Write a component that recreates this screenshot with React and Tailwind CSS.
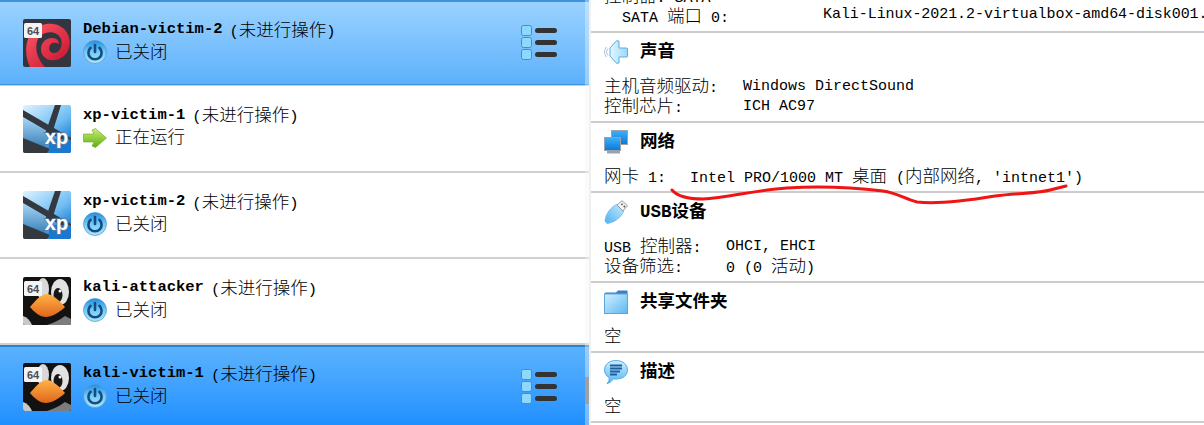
import React from 'react'

const CJK = /([\u3000-\u9fff\uff00-\uffef]+)/

// Latin runs sit in the mono face, CJK runs get a larger size like the original
function T({ children }) {
  return (
    <span>
      {String(children).split(CJK).map((part, i) =>
        CJK.test(part)
          ? <span key={i} className="text-[17.5px] font-['Noto_Sans_CJK_SC'] font-light">{part}</span>
          : <span key={i}>{part}</span>
      )}
    </span>
  )
}

function Badge64() {
  return (
    <>
      <rect x="1" y="4" width="18" height="15" rx="1.5" fill="#f4f4f4" />
      <text x="10" y="15.5" textAnchor="middle" fontSize="11" fontWeight="700" fontFamily="'Liberation Sans', sans-serif" fill="#4a4d55">64</text>
    </>
  )
}

function DebianIcon() {
  return (
    <svg width="48" height="48" viewBox="0 0 48 48" className="shrink-0">
      <defs>
        <linearGradient id="deb" x1="0" y1="0" x2="1" y2="1">
          <stop offset="0" stopColor="#ff5a68" />
          <stop offset="1" stopColor="#c4102c" />
        </linearGradient>
      </defs>
      <rect width="48" height="48" rx="2" fill="#33363f" />
      <path d="M7 48 C1 36 2 20 10 12 C18 3 34 2 42 11 C49 19 48 31 41 37 C34 43 23 43 19 35 C16 28 20 19 29 19 C33 19 36 21 36 25 C34 24 30 23 28 25 C24 29 27 35 32 34 C37 33 40 27 38 20 C35 12 24 11 17 17 C11 24 12 38 22 48 Z" fill="url(#deb)" />
      <Badge64 />
    </svg>
  )
}

function XpIcon() {
  return (
    <svg width="48" height="48" viewBox="0 0 48 48" className="shrink-0">
      <defs>
        <linearGradient id="xpg" x1="0" y1="0" x2="0.7" y2="1">
          <stop offset="0" stopColor="#e0f3ff" />
          <stop offset="0.6" stopColor="#6dbcf2" />
          <stop offset="1" stopColor="#1270c8" />
        </linearGradient>
        <linearGradient id="xpl" x1="0" y1="0" x2="0" y2="1">
          <stop offset="0" stopColor="#a8d8f8" />
          <stop offset="1" stopColor="#3c80b8" />
        </linearGradient>
      </defs>
      <rect width="48" height="48" rx="2" fill="url(#xpg)" />
      <path d="M0 12 L24 27 L22 42 L0 34 Z" fill="url(#xpl)" />
      <path d="M0 33 L27 44 L24 48 L2 48 Q0 48 0 46 Z" fill="#33393f" />
      <path d="M0 5 L48 33 L48 40 L0 12 Z" fill="#33393f" />
      <path d="M32 0 L38 0 L28 32 L22 29 Z" fill="#33393f" />
      <rect x="26" y="34" width="22" height="14" rx="2" fill="#1a78d0" />
      <text x="33.5" y="39" textAnchor="middle" fontSize="20" fontWeight="700" fontFamily="'Liberation Sans', sans-serif" fill="#fff" stroke="#5a7fa8" strokeWidth="1.6" paintOrder="stroke">xp</text>
    </svg>
  )
}

function KaliIcon() {
  return (
    <svg width="48" height="48" viewBox="0 0 48 48" className="shrink-0">
      <defs>
        <linearGradient id="beak" x1="0" y1="0" x2="0" y2="1">
          <stop offset="0" stopColor="#ffb347" />
          <stop offset="1" stopColor="#e0651a" />
        </linearGradient>
      </defs>
      <rect width="48" height="48" rx="2" fill="#121212" />
      <path d="M0 39 Q6 41 9 48 L2 48 Q0 48 0 46 Z" fill="#c8c8c8" />
      <path d="M24 48 Q34 45 42 39 L48 42 L48 46 Q48 48 46 48 Z" fill="#7c7c7c" />
      <ellipse cx="37" cy="15" rx="9" ry="13" fill="#e2e2e2" />
      <ellipse cx="20" cy="12" rx="6" ry="11" fill="#d8d8d8" />
      <ellipse cx="35" cy="18" rx="4.5" ry="7" fill="#161616" />
      <circle cx="37" cy="14" r="1.5" fill="#fff" />
      <path d="M7 30 C12 24 18 17 24 17 C29 17 37 24 42 30 C36 36 28 40 23 40 C17 40 11 35 7 30 Z" fill="url(#beak)" />
      <Badge64 />
    </svg>
  )
}

function PowerIcon() {
  return (
    <svg width="24" height="24" viewBox="0 0 24 24" className="shrink-0">
      <defs>
        <linearGradient id="pw" x1="0" y1="0" x2="0" y2="1">
          <stop offset="0" stopColor="#1f8fe2" />
          <stop offset="0.5" stopColor="#6ecdf8" />
          <stop offset="1" stopColor="#a8e8fd" />
        </linearGradient>
      </defs>
      <circle cx="12" cy="12" r="11.5" fill="url(#pw)" stroke="#5b93c4" strokeWidth="0.7" />
      <path d="M7.6 7.8 A6.6 6.6 0 1 0 16.4 7.8" fill="none" stroke="#1b4a80" strokeWidth="2.6" strokeLinecap="round" />
      <path d="M12 5 V12" stroke="#1b4a80" strokeWidth="2.6" strokeLinecap="round" />
    </svg>
  )
}

function ArrowIcon() {
  return (
    <svg width="24" height="24" viewBox="0 0 24 24" className="shrink-0">
      <defs>
        <linearGradient id="arr" x1="0" y1="0" x2="0" y2="1">
          <stop offset="0" stopColor="#c8ee70" />
          <stop offset="1" stopColor="#5cb012" />
        </linearGradient>
      </defs>
      <path d="M0.5 8 H11 L9 4 L12.5 2.5 L23.5 12 L12.5 21.5 L9 20 L11 16 H0.5 Z" fill="url(#arr)" stroke="#6fa12c" strokeWidth="0.6" strokeLinejoin="round" />
    </svg>
  )
}

function MenuIcon() {
  return (
    <svg width="36" height="36" viewBox="0 0 36 36" className="shrink-0">
      {[0, 12, 24].map(y => (
        <g key={y}>
          <rect x="0.5" y={y + 0.5} width="10" height="10" rx="2" fill="#8fd8fd" stroke="#3a8fd8" />
          <rect x="14" y={y + 3} width="22" height="5" rx="2.5" fill="#333" />
        </g>
      ))}
    </svg>
  )
}

function SoundIcon() {
  return (
    <svg width="24" height="24" viewBox="0 0 24 24">
      <defs>
        <linearGradient id="snd" x1="0" y1="0" x2="1" y2="0">
          <stop offset="0" stopColor="#e4f6ff" />
          <stop offset="1" stopColor="#9adaf9" />
        </linearGradient>
      </defs>
      <path d="M0.5 12 A9 9 0 0 1 2.5 7 M2.5 12 A7 7 0 0 1 4 8.5 M0.5 12 A9 9 0 0 0 2.5 17 M2.5 12 A7 7 0 0 0 4 15.5" fill="none" stroke="#9bb4c8" strokeWidth="0.8" />
      <path d="M6 8 L12.5 0.7 L15 1 V8 H22.5 Q23.5 8 23.5 9 V16 Q23.5 17 22.5 17 H15 V23 L12.5 23.3 L6 16 Z" fill="url(#snd)" stroke="#4aa3e4" strokeWidth="0.9" strokeLinejoin="round" />
    </svg>
  )
}

function NetworkIcon() {
  return (
    <svg width="24" height="24" viewBox="0 0 24 24">
      <defs>
        <linearGradient id="net" x1="0" y1="0" x2="0" y2="1">
          <stop offset="0" stopColor="#3fb0f8" />
          <stop offset="1" stopColor="#0878dc" />
        </linearGradient>
      </defs>
      <rect x="7.5" y="0.5" width="16" height="14" fill="url(#net)" stroke="#9aa3ab" />
      <rect x="0.5" y="7.5" width="16" height="13" fill="url(#net)" stroke="#9aa3ab" />
      <rect x="3" y="21" width="13" height="2.5" fill="#9aa3ab" />
    </svg>
  )
}

function UsbIcon() {
  return (
    <svg width="24" height="24" viewBox="0 0 24 24">
      <defs>
        <linearGradient id="usb" x1="0" y1="1" x2="1" y2="0">
          <stop offset="0" stopColor="#4fb2f2" />
          <stop offset="1" stopColor="#c4eafe" />
        </linearGradient>
      </defs>
      <path d="M1 21 C1.5 14 7 7 12.5 4.5 L19.5 11.5 C17 18 9 23 3 23.5 Z" fill="url(#usb)" stroke="#58aee8" strokeWidth="0.7" />
      <path d="M13 5 L18 0.7 L23.5 5.7 L19 11 Z" fill="#f2f4f6" stroke="#7b8791" strokeWidth="0.8" />
      <rect x="17.2" y="3.5" width="1.6" height="1.6" fill="#555" transform="rotate(45 18 4.3)" />
      <rect x="19.6" y="5.7" width="1.6" height="1.6" fill="#555" transform="rotate(45 20.4 6.5)" />
    </svg>
  )
}

function FolderIcon() {
  return (
    <svg width="24" height="24" viewBox="0 0 24 24">
      <defs>
        <linearGradient id="fol" x1="0" y1="0" x2="1" y2="1">
          <stop offset="0" stopColor="#d2f0ff" />
          <stop offset="1" stopColor="#5cb8f3" />
        </linearGradient>
      </defs>
      <path d="M0.5 4 Q0.5 2.5 2 2.5 H12 L14 0.5 H23.5 V5 H0.5 Z" fill="#3c7fc4" />
      <rect x="0.5" y="4" width="23" height="19.5" fill="url(#fol)" stroke="#5aa7e0" />
    </svg>
  )
}

function DescIcon() {
  return (
    <svg width="24" height="24" viewBox="0 0 24 24">
      <defs>
        <linearGradient id="dsc" x1="0" y1="0" x2="0" y2="1">
          <stop offset="0" stopColor="#c8edff" />
          <stop offset="1" stopColor="#58b8f4" />
        </linearGradient>
      </defs>
      <path d="M12 0.5 C19 0.5 23.5 4.5 23.5 10 C23.5 15.5 19 19 12 19 C11 19 10 19 9 18.8 C8 21 6 23 3 23.5 C5 21.5 5.5 19.5 5 17.5 C2 16 0.5 13 0.5 10 C0.5 4.5 5 0.5 12 0.5 Z" fill="url(#dsc)" stroke="#3f9be0" strokeWidth="0.8" />
      <path d="M6 5.5 H18 M6 8.5 H18 M6 11.5 H16 M6 14.5 H13" stroke="#1f5f9e" strokeWidth="1.8" />
    </svg>
  )
}

const VMS = [
  { name: 'Debian-victim-2', icon: DebianIcon, status: '已关闭', tone: 'top', h: 'h-[86px]' },
  { name: 'xp-victim-1', icon: XpIcon, status: '正在运行', h: 'h-[87px]' },
  { name: 'xp-victim-2', icon: XpIcon, status: '已关闭', h: 'h-[86px]' },
  { name: 'kali-attacker', icon: KaliIcon, status: '已关闭', h: 'h-[86px]' },
  { name: 'kali-victim-1', icon: KaliIcon, status: '已关闭', tone: 'bottom', h: 'h-[82px]' },
]

function VmRow({ vm }) {
  const Icon = vm.icon
  const bg = vm.tone === 'top'
    ? 'bg-gradient-to-b from-[#9ad2ff] to-[#5cb1fb] border-t-2 border-t-[#3d93dc]'
    : vm.tone === 'bottom'
      ? 'bg-gradient-to-b from-[#5ab2fd] to-[#1c8fff] border-t-2 border-t-[#2b80cf]'
      : ''
  return (
    <div className={`${vm.h} shrink-0 flex flex-col`}>
      <div className={`flex-1 flex items-center pl-[23px] pr-[32px] ${bg}`}>
        <Icon />
        <div className="ml-3 mb-[4px] flex-1 flex flex-col font-['Liberation_Mono'] text-[15.5px] text-black">
          <div className="h-[22px] flex items-center">
            <span className="font-bold">{vm.name}</span>
            <span className="ml-[7px]"><T>{'(未进行操作)'}</T></span>
          </div>
          <div className="h-[22px] flex items-center gap-2">
            {vm.status === '正在运行' ? <ArrowIcon /> : <PowerIcon />}
            <T>{vm.status}</T>
          </div>
        </div>
        {vm.tone && <MenuIcon />}
      </div>
      {vm.tone !== 'bottom' && (
        <div className={`h-[2px] ${vm.tone === 'top' ? 'bg-[#d0d0d0] border-t border-[#3d93dc]' : 'bg-[#d0d0d0]'}`} />
      )}
    </div>
  )
}

function Section({ icon: Icon, title, h = 'h-[70px]', children }) {
  return (
    <div className={`${h} shrink-0 border-b-2 border-[#cccccc] pl-[13px]`}>
      <div className="h-[38px] flex items-center gap-3">
        <Icon />
        <span className="font-bold text-[17.5px] font-['Liberation_Mono','Noto_Sans_CJK_SC',monospace]">{title}</span>
      </div>
      <div className="pt-[6px]">{children}</div>
    </div>
  )
}

function Line({ label, w, value }) {
  return (
    <div className="h-[20px] flex items-center whitespace-nowrap">
      <span className={w}><T>{label}</T></span>
      <span><T>{value}</T></span>
    </div>
  )
}

function Squiggle() {
  return (
    <svg width="420" height="30" viewBox="0 0 420 30" className="absolute left-[665px] top-[180px] pointer-events-none">
      <path
        d="M7 10 C12 16 22 19 38 19 C62 18 90 10 122 8 C150 6 185 7 218 11 C232 13 240 19 252 22 C270 24 300 21 330 16 C355 13 375 13 385 10 L401 6"
        fill="none"
        stroke="#f01414"
        strokeWidth="3"
        strokeLinecap="round"
      />
    </svg>
  )
}

export default function App() {
  return (
    <div className="relative w-[1204px] h-[425px] overflow-hidden bg-white flex text-black">
      <div className="relative w-[589px] shrink-0 flex flex-col overflow-hidden">
        {VMS.map(vm => <VmRow key={vm.name} vm={vm} />)}
        <div className="absolute right-0 top-0 bottom-0 w-[4px] bg-[#f4f4f4]/40" />
        <div className="absolute right-0 top-[377px] h-[27px] w-[4px] bg-[#a0a0a0]" />
      </div>
      <div className="w-[2px] shrink-0 bg-[#f0f0f0]" />
      <div className="flex-1 min-w-0 flex flex-col overflow-hidden font-['Liberation_Mono'] text-[15px] leading-[20px]">
        <div className="h-[33px] shrink-0 border-b-2 border-[#cccccc] pl-[13px] flex flex-col justify-end pb-[6px] overflow-hidden whitespace-nowrap">
          <div className="h-[20px] shrink-0"><T>控制器: SATA</T></div>
          <div className="h-[20px] shrink-0 flex pl-[18px]">
            <span className="w-[201px] shrink-0"><T>SATA 端口 0:</T></span>
            <span className="tracking-[-0.06px]">Kali-Linux-2021.2-virtualbox-amd64-disk001.</span>
          </div>
        </div>
        <Section icon={SoundIcon} title="声音" h="h-[90px]">
          <Line label="主机音频驱动:" w="w-[139px]" value="Windows DirectSound" />
          <Line label="控制芯片:" w="w-[139px]" value="ICH AC97" />
        </Section>
        <Section icon={NetworkIcon} title="网络">
          <Line label="网卡 1:" w="w-[86px]" value="Intel PRO/1000 MT 桌面 (内部网络, 'intnet1')" />
        </Section>
        <Section icon={UsbIcon} title="USB设备" h="h-[90px]">
          <Line label="USB 控制器:" w="w-[122px]" value="OHCI, EHCI" />
          <Line label="设备筛选:" w="w-[122px]" value="0 (0 活动)" />
        </Section>
        <Section icon={FolderIcon} title="共享文件夹">
          <Line label="空" w="" value="" />
        </Section>
        <Section icon={DescIcon} title="描述">
          <Line label="空" w="" value="" />
        </Section>
      </div>
      <Squiggle />
    </div>
  )
}
